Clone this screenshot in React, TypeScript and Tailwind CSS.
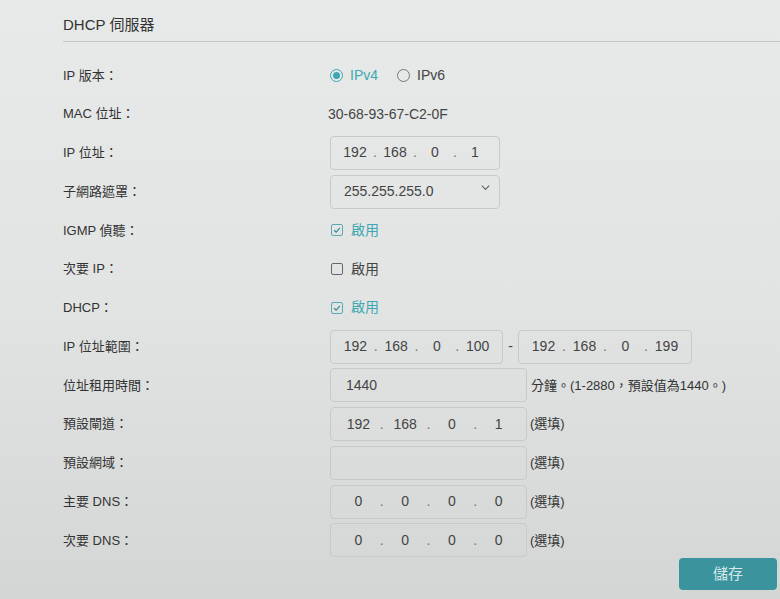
import React from 'react'

const font = { fontFamily: '"Liberation Sans", Arial, "Noto Sans CJK TC", sans-serif' }

function IpBox({ parts, className }: { parts: string[]; className: string }) {
  return (
    <div className={`flex h-[34px] items-center rounded-[4px] border border-[#c8cac9] px-2 ${className}`}>
      {parts.map((p, i) => (
        <React.Fragment key={i}>
          <span className="flex-1 text-center">{p}</span>
          {i < parts.length - 1 && <span className="w-2 text-center text-[#777]">.</span>}
        </React.Fragment>
      ))}
    </div>
  )
}

function Radio({ checked, label }: { checked: boolean; label: string }) {
  return (
    <label className="flex items-center gap-[7px]">
      <span
        className={`flex h-[13px] w-[13px] items-center justify-center rounded-full border ${
          checked ? 'border-[#3ea7b1]' : 'border-[#777]'
        }`}
      >
        {checked && <span className="h-[7px] w-[7px] rounded-full bg-[#3ea7b1]" />}
      </span>
      <span className={checked ? 'text-[#3ea7b1]' : 'text-[#444]'}>{label}</span>
    </label>
  )
}

function Check({ checked }: { checked: boolean }) {
  return (
    <label className="ml-[1px] flex items-center gap-[8px]">
      <span
        className={`flex h-[12px] w-[12px] items-center justify-center rounded-[2px] border ${
          checked ? 'border-[#5aa9b0]' : 'border-[#666]'
        }`}
      >
        {checked && (
          <svg viewBox="0 0 12 12" className="h-[10px] w-[10px]">
            <path d="M2.5 6.2 L5 8.5 L9.5 3.5" fill="none" stroke="#3a8e97" strokeWidth="1.6" />
          </svg>
        )}
      </span>
      <span className={checked ? 'text-[#3ea7b1]' : 'text-[#444]'}>啟用</span>
    </label>
  )
}

const optional = <span className="ml-[3px] text-[13px] text-[#333]">(選填)</span>

export default function App() {
  const rows: { label: string; content: React.ReactNode }[] = [
    {
      label: 'IP 版本：',
      content: (
        <div className="flex items-center gap-[19px]">
          <Radio checked label="IPv4" />
          <Radio checked={false} label="IPv6" />
        </div>
      ),
    },
    { label: 'MAC 位址：', content: <span className="-ml-[2px]">30-68-93-67-C2-0F</span> },
    { label: 'IP 位址：', content: <IpBox parts={['192', '168', '0', '1']} className="w-[170px]" /> },
    {
      label: '子網路遮罩：',
      content: (
        <div className="flex h-[34px] w-[170px] items-center justify-between rounded-[4px] border border-[#c8cac9] pl-[13px] pr-[8px]">
          <span>255.255.255.0</span>
          <svg viewBox="0 0 12 12" className="mb-[8px] h-[11px] w-[11px]">
            <path d="M2 4 L6 8 L10 4" fill="none" stroke="#666" strokeWidth="1.3" />
          </svg>
        </div>
      ),
    },
    { label: 'IGMP 偵聽：', content: <Check checked /> },
    { label: '次要 IP：', content: <Check checked={false} /> },
    { label: 'DHCP：', content: <Check checked /> },
    {
      label: 'IP 位址範圍：',
      content: (
        <div className="flex items-center">
          <IpBox parts={['192', '168', '0', '100']} className="w-[173px]" />
          <span className="w-[15px] text-center">-</span>
          <IpBox parts={['192', '168', '0', '199']} className="w-[174px]" />
        </div>
      ),
    },
    {
      label: '位址租用時間：',
      content: (
        <div className="flex items-center">
          <div className="flex h-[34px] w-[197px] items-center rounded-[4px] border border-[#c8cac9] px-[15px]">1440</div>
          <span className="ml-[4px] text-[13px] text-[#333]">分鐘。(1-2880，預設值為1440。)</span>
        </div>
      ),
    },
    {
      label: '預設閘道：',
      content: (
        <div className="flex items-center">
          <IpBox parts={['192', '168', '0', '1']} className="w-[197px]" />
          {optional}
        </div>
      ),
    },
    {
      label: '預設網域：',
      content: (
        <div className="flex items-center">
          <div className="h-[34px] w-[197px] rounded-[4px] border border-[#c8cac9]" />
          {optional}
        </div>
      ),
    },
    {
      label: '主要 DNS：',
      content: (
        <div className="flex items-center">
          <IpBox parts={['0', '0', '0', '0']} className="w-[197px]" />
          {optional}
        </div>
      ),
    },
    {
      label: '次要 DNS：',
      content: (
        <div className="flex items-center">
          <IpBox parts={['0', '0', '0', '0']} className="w-[197px]" />
          {optional}
        </div>
      ),
    },
  ]

  return (
    <div
      style={font}
      className="h-[599px] w-[780px] overflow-hidden bg-gradient-to-b from-[#e8eae9] via-[#e2e4e3] to-[#d4d6d5] text-[14px] text-[#444]"
    >
      <div className="pl-[63px] pt-[15px]">
        <h1 className="text-[15px] leading-[20px] text-[#333]">DHCP 伺服器</h1>
        <div className="mt-[6px] h-px bg-[#c4c6c5]" />
        <div className="mt-[14px] flex flex-col">
          {rows.map((r) => (
            <div key={r.label} className="flex h-[38.75px] items-center">
              <div className="w-[267px] text-[13px] text-[#333]">{r.label}</div>
              <div className="flex items-center">{r.content}</div>
            </div>
          ))}
        </div>
        <div className="-mt-[2px] flex justify-end pr-[3px]">
          <button className="h-[32px] w-[98px] rounded-[4px] bg-[#3a939d] text-[15px] text-[#d7e8ea]">儲存</button>
        </div>
      </div>
    </div>
  )
}
